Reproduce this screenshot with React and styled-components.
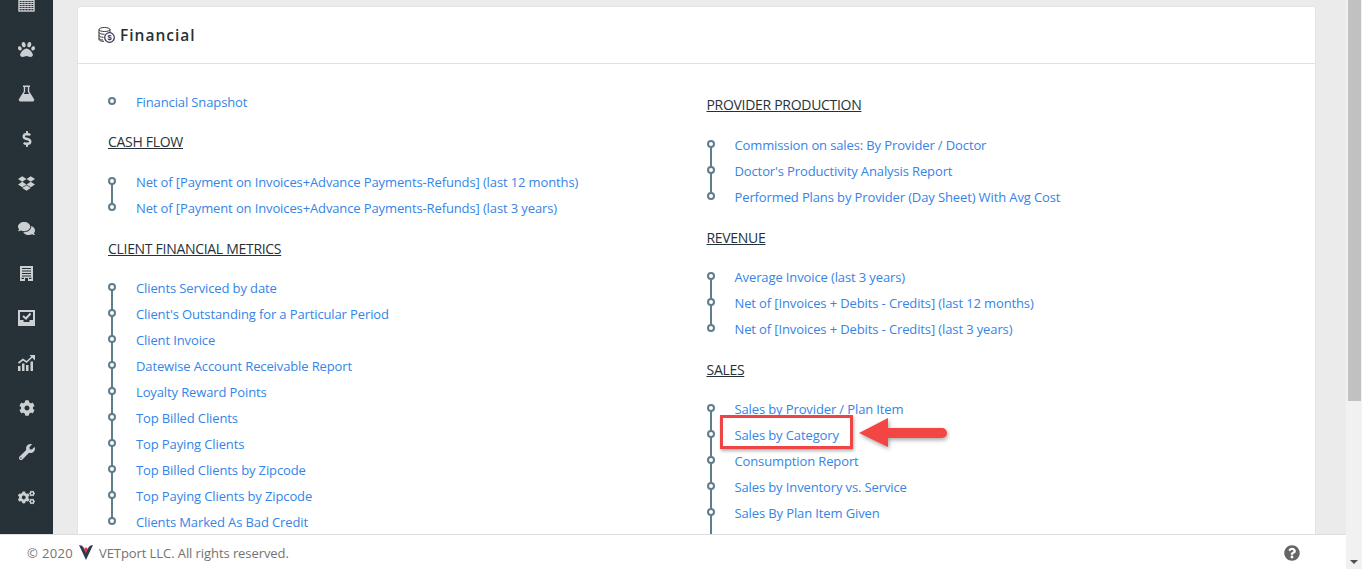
import React from 'react';
import styled, { createGlobalStyle } from 'styled-components';
import { FaPaw, FaDollarSign, FaDropbox, FaComments, FaCog, FaWrench, FaCogs, FaQuestionCircle } from 'react-icons/fa';

const Global = createGlobalStyle`
  html, body { margin: 0; padding: 0; height: 569px; overflow: hidden; background: #ebebeb; }
  *, *::before, *::after { box-sizing: border-box; }
  body { font-family: "Open Sans", "Liberation Sans", sans-serif; }
`;
const Page = styled.div`display: flex; width: 1362px; height: 569px; overflow: hidden;`;
const Viewport = styled.div`flex: 1; min-width: 0; display: flex; flex-direction: column;`;
const Main = styled.div`height: 534px; flex: none; display: flex; overflow: hidden;`;
const Sidebar = styled.nav`width: 53px; background: #263238; flex: none; color: #cdd0d2; overflow: hidden;`;
const NavList = styled.div`margin-top: -18px; display: flex; flex-direction: column;`;
const NavIcon = styled.div`
  height: 44.8px; width: 100%; display: flex; align-items: center; justify-content: center; flex: none;
  font-size: ${p => p.$size || 17}px;
`;
const Content = styled.main`flex: 1; padding: 6px 30px 0 24px; min-width: 0;`;
const Card = styled.section`background: #fff; border: 1px solid #e4e4e4; border-radius: 3px; height: 560px;`;
const CardHead = styled.header`
  height: 57px; border-bottom: 1px solid #e0e0e0; display: flex; align-items: center; gap: 5px; padding-left: 20px;
`;
const CardTitle = styled.h2`margin: 0; font-size: 15.5px; font-weight: 600; color: #263238; letter-spacing: 1px;`;
const Columns = styled.div`display: grid; grid-template-columns: 598.5px 1fr; padding: 28px 30px 0;`;
const Col = styled.div`display: flex; flex-direction: column;`;
const Heading = styled.h3`
  margin: ${p => p.$top ?? 15}px 0 ${p => p.$bottom ?? 19}px; font-size: 14px; line-height: 20px; font-weight: 400; color: #263238;
  text-decoration: underline; text-transform: uppercase; letter-spacing: -.3px;
`;
const Timeline = styled.ul`list-style: none; margin: 0; padding: 0;`;
const Item = styled.li`
  position: relative; height: 26px; padding-left: 28px; display: flex; align-items: center;
  &::before { content: ""; position: absolute; left: 0; top: 5px; width: 8px; height: 8px; border: 2px solid #607d8b; border-radius: 50%; background: #fff; z-index: 1; }
  &::after { content: ""; position: absolute; left: 3px; top: 9px; width: 2px; height: ${p => p.$last ? 0 : 26}px; background: #607d8b; }
`;
const Link = styled.a`font-size: 13px; color: #3584e8; letter-spacing: -.12px; white-space: nowrap; text-decoration: none; margin-top: -6px;`;
const Callout = styled.div`
  position: absolute; left: 13px; top: -10px; width: 133px; height: 34px; border: 3px solid #f04545;
  box-shadow: 1px 2px 3px rgba(0,0,0,.3);
`;
const Arrow = styled.svg`position: absolute; left: 151px; top: -8px;`;
const Footer = styled.footer`
  height: 35px; flex: none; background: #fff; border-top: 1px solid #dedede; display: flex; align-items: center;
  padding: 1px 46px 0 27px; font-size: 13px; color: #737373; letter-spacing: -.08px;
`;
const Copy = styled.span`flex: 1; display: flex; align-items: center; gap: 6px;`;
const Year = styled.span`letter-spacing: .35px;`;
const Help = styled.span`color: #666; font-size: 16px; display: flex;`;
const ScrollTrack = styled.div`width: 16px; flex: none; background: #f1f1f1; display: flex; flex-direction: column;`;
const ScrollThumb = styled.div`width: 13px; height: 401px; background: #c1c1c1; margin-left: 2px;`;
const Spacer = styled.div`flex: 1;`;
const ScrollArrow = styled.div`width: 0; height: 0; margin: 0 auto 5px; border: 4px solid transparent; border-top: 4px solid #505050; border-bottom: 0;`;

const C = '#cdd0d2';
const D = '#263238';
const Ledger = () => (
  <svg width="17" height="15" viewBox="0 0 17 15" fill="none" stroke={C}>
    <rect x="1" y="-3" width="15" height="17" strokeWidth="1.4" />
    <path d="M1 1.5h15M1 3.5h15M1 5.5h15M1 7.5h15M1 9.5h15M1 11.5h15" strokeWidth="1" />
    <path d="M4 -3v17M7 -3v17M10 -3v17M13 -3v17" strokeWidth=".8" />
  </svg>
);
const Flask = () => (
  <svg width="17" height="17" viewBox="0 0 17 17">
    <path fill="none" stroke={C} strokeWidth="1.4" d="M6.5 1.5v5L1.6 14.4a.9.9 0 0 0 .8 1.4h12.2a.9.9 0 0 0 .8-1.4L10.5 6.500v-5" />
    <path fill={C} d="M5 .5h7v1.600H5zM4.500 9h8l3 6.500H1.500z" />
  </svg>
);
const Receipt = () => (
  <svg width="13" height="15" viewBox="0 0 13 15">
    <path fill={C} d="M0 0h13v15H0z" />
    <path fill={D} d="M2 2h9v1H2zM2 4.500h9v1H2zM2 7h9v1H2zM2 9.500h9v1H2zM1.500 13h2.500v-1.200H1.500zM5 12h3v3H5zM9 13h2.500v-1.200H9z" />
  </svg>
);
const InboxCheck = () => (
  <svg width="17" height="16" viewBox="0 0 17 16">
    <path fill={C} d="M0 0h17v16H0z" />
    <path fill={D} d="M2 2h13v8h-3.500v2h-6v-2H2z" />
    <path fill="none" stroke={C} strokeWidth="2" d="M5 6l3 2.500L12.500 3.500" />
  </svg>
);
const Growth = () => (
  <svg width="17" height="16" viewBox="0 0 17 16">
    <path fill={C} d="M0 11h2.500v5H0zM4 8.500h2.500V16H4zM8 10h2.500v6H8zM12.500 6.500H15V16h-2.500z" />
    <path fill="none" stroke={C} strokeWidth="1.600" d="M.5 8L5 4.500l3.500 2.500L14.500 1.500" />
    <path fill={C} d="M11.500 0H17v5.500z" />
  </svg>
);
const Coins = () => (
  <svg width="17" height="16" viewBox="0 0 17 16" fill="none">
    <ellipse cx="6.500" cy="2.500" rx="5.500" ry="2" stroke="#333" />
    <path d="M1 2.500v10c0 1 2 1.800 5 1.800M12 2.500v3M1 5.500c0 1 2.500 1.800 5.500 1.800M1 8.500c0 1 2 1.800 4.500 1.800M1 11.500c0 .8 2 1.500 4 1.500" stroke="#333" />
    <circle cx="11.500" cy="10.500" r="4.800" fill="#fff" stroke="#3a2a60" strokeWidth="1.200" />
    <text x="11.500" y="13.200" fontSize="7.500" fontWeight="700" textAnchor="middle" fill="#333" fontFamily="Liberation Sans">$</text>
  </svg>
);
const Logo = () => (
  <svg width="14" height="16" viewBox="0 0 14 16">
    <path d="M0 0l3 .8 4 5.200 4-5.200 3-.8-7 15z" fill="#263a52" />
    <path d="M3 1l1.600 1.200.9 1.800 1.500-2 1.300 2 1.600-3L7 8.500z" fill="#e2383f" />
  </svg>
);

const L = ({ items }) => (
  <Timeline>
    {items.map((t, i) => (
      <Item key={t} $last={i === items.length - 1}>
        <Link>{t}</Link>
      </Item>
    ))}
  </Timeline>
);

export default function App() {
  return (
    <Page>
      <Global />
      <Viewport>
        <Main>
          <Sidebar>
            <NavList>
              <NavIcon><Ledger /></NavIcon>
              <NavIcon><FaPaw /></NavIcon>
              <NavIcon><Flask /></NavIcon>
              <NavIcon $size={16}><FaDollarSign /></NavIcon>
              <NavIcon><FaDropbox /></NavIcon>
              <NavIcon><FaComments /></NavIcon>
              <NavIcon><Receipt /></NavIcon>
              <NavIcon><InboxCheck /></NavIcon>
              <NavIcon><Growth /></NavIcon>
              <NavIcon $size={16}><FaCog /></NavIcon>
              <NavIcon $size={16}><FaWrench /></NavIcon>
              <NavIcon><FaCogs /></NavIcon>
            </NavList>
          </Sidebar>
          <Content>
            <Card>
              <CardHead>
                <Coins />
                <CardTitle>Financial</CardTitle>
              </CardHead>
              <Columns>
                <Col>
                  <L items={['Financial Snapshot']} />
                  <Heading $top={14} $bottom={20}>Cash Flow</Heading>
                  <L items={['Net of [Payment on Invoices+Advance Payments-Refunds] (last 12 months)', 'Net of [Payment on Invoices+Advance Payments-Refunds] (last 3 years)']} />
                  <Heading>Client Financial Metrics</Heading>
                  <L items={["Clients Serviced by date", "Client's Outstanding for a Particular Period", 'Client Invoice', 'Datewise Account Receivable Report', 'Loyalty Reward Points', 'Top Billed Clients', 'Top Paying Clients', 'Top Billed Clients by Zipcode', 'Top Paying Clients by Zipcode', 'Clients Marked As Bad Credit']} />
                </Col>
                <Col>
                  <Heading $top={3} $bottom={20}>Provider Production</Heading>
                  <L items={['Commission on sales: By Provider / Doctor', "Doctor's Productivity Analysis Report", 'Performed Plans by Provider (Day Sheet) With Avg Cost']} />
                  <Heading>Revenue</Heading>
                  <L items={['Average Invoice (last 3 years)', 'Net of [Invoices + Debits - Credits] (last 12 months)', 'Net of [Invoices + Debits - Credits] (last 3 years)']} />
                  <Heading>Sales</Heading>
                  <Timeline>
                    <Item><Link>Sales by Provider / Plan Item</Link></Item>
                    <Item>
                      <Link>Sales by Category</Link>
                      <Callout />
                      <Arrow width="92" height="36" viewBox="0 0 92 36">
                        <path d="M1 16 L30 1 V11 H84 a5 5 0 0 1 0 10 H30 V30 Z" fill="#f44545" style={{ filter: 'drop-shadow(1px 2px 2px rgba(0,0,0,.35))' }} />
                      </Arrow>
                    </Item>
                    <Item><Link>Consumption Report</Link></Item>
                    <Item><Link>Sales by Inventory vs. Service</Link></Item>
                    <Item><Link>Sales By Plan Item Given</Link></Item>
                    <Item $last />
                  </Timeline>
                </Col>
              </Columns>
            </Card>
          </Content>
        </Main>
        <Footer>
          <Copy><Year>© 2020</Year> <Logo /> VETport LLC. All rights reserved.</Copy>
          <Help><FaQuestionCircle /></Help>
        </Footer>
      </Viewport>
      <ScrollTrack>
        <ScrollThumb />
        <Spacer />
        <ScrollArrow />
      </ScrollTrack>
    </Page>
  );
}
